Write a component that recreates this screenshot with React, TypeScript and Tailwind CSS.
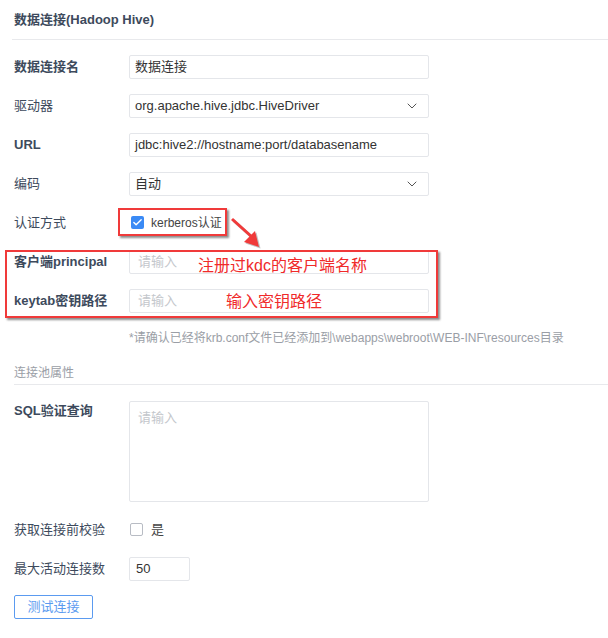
import { ChevronDown, Check } from 'lucide-react'

const FONT = { fontFamily: '"Liberation Sans", "Noto Sans CJK SC", sans-serif' }

function Row({ label, bold, children }: { label: string; bold?: boolean; children: React.ReactNode }) {
  return (
    <div className="flex items-center h-[39px]">
      <div className={`w-[115px] text-[13px] text-[#3d4a5c] ${bold ? 'font-bold' : ''}`}>{label}</div>
      {children}
    </div>
  )
}

function TextBox({ value, placeholder }: { value?: string; placeholder?: string }) {
  return (
    <div className="w-[300px] h-6 border border-[#e4e6ea] rounded-[2px] flex items-center px-[5px] text-[13px]">
      {value ? <span className="text-[#333]">{value}</span> : <span className="pl-[3px] text-[#c4c7cc]">{placeholder}</span>}
    </div>
  )
}

function SelectBox({ value }: { value: string }) {
  return (
    <div className="w-[300px] h-6 border border-[#e4e6ea] rounded-[2px] flex items-center justify-between pl-[5px] pr-2 text-[13px] text-[#333]">
      <span>{value}</span>
      <ChevronDown size={16} strokeWidth={1.5} className="text-[#555]" />
    </div>
  )
}

export default function App() {
  return (
    <div className="w-[608px] h-[638px] bg-white overflow-hidden" style={FONT}>
      <div className="pl-3">
        {/* Header */}
        <div className="h-10 flex items-center pl-0.5 border-b border-[#e8e9ec] text-[13px] font-bold text-[#3d4a5c]">
          数据连接(Hadoop Hive)
        </div>

        <div className="pl-0.5 mt-[7px] relative">
          <Row label="数据连接名" bold><TextBox value="数据连接" /></Row>
          <Row label="驱动器"><SelectBox value="org.apache.hive.jdbc.HiveDriver" /></Row>
          <Row label="URL" bold><TextBox value="jdbc:hive2://hostname:port/databasename" /></Row>
          <Row label="编码"><SelectBox value="自动" /></Row>
          <Row label="认证方式">
            <div className="flex items-center gap-[7px] pl-0.5">
              <span className="w-[13px] h-[13px] rounded-[2px] bg-[#3a8af5] flex items-center justify-center">
                <Check size={11} strokeWidth={3} className="text-white" />
              </span>
              <span className="text-[12px] text-[#444]">kerberos认证</span>
            </div>
          </Row>
          <Row label="客户端principal" bold><TextBox placeholder="请输入" /></Row>
          <Row label="keytab密钥路径" bold><TextBox placeholder="请输入" /></Row>

          {/* annotations */}
          <div className="absolute left-[106px] top-[161px] w-[109px] h-[28px] border-2 border-[#f03a3a] shadow-[2px_2px_2px_rgba(0,0,0,0.45)]" />
          <svg className="absolute left-[216px] top-[168px]" width="40" height="40" viewBox="0 0 40 40">
            <g transform="translate(1.5,1.5)" fill="#888" stroke="#888" opacity="0.5">
              <line x1="4" y1="4" x2="24" y2="22" strokeWidth="3" />
              <polygon points="16,27 31,32 27,16" stroke="none" />
            </g>
            <line x1="4" y1="4" x2="24" y2="22" stroke="#f03a3a" strokeWidth="3" />
            <polygon points="16,27 31,32 27,16" fill="#f03a3a" />
          </svg>
          <div className="absolute left-[-7px] top-[203px] w-[433px] h-[68px] border-2 border-[#f03a3a] shadow-[2px_2px_2px_rgba(0,0,0,0.45)]" />
          <div className="absolute left-[186px] top-[207px] text-[16px] text-[#f02a2a]">注册过kdc的客户端名称</div>
          <div className="absolute left-[214px] top-[243px] text-[16px] text-[#f02a2a]">输入密钥路径</div>
        </div>

        <div className="pl-[117px] mt-[9px] text-[12px] text-[#9a9ea6]">
          *请确认已经将krb.conf文件已经添加到\webapps\webroot\WEB-INF\resources目录
        </div>

        <div className="ml-0.5 mt-[14px] h-[24px] flex items-center border-b border-[#e8e9ec] text-[12px] text-[#9a9ea6]">
          连接池属性
        </div>

        <div className="pl-0.5 mt-[16px] flex">
          <div className="w-[115px] text-[13px] font-bold text-[#3d4a5c]">SQL验证查询</div>
          <div className="w-[300px] h-[101px] border border-[#e4e6ea] rounded-[2px] px-2 pt-[6px] text-[13px] text-[#c4c7cc]">
            请输入
          </div>
        </div>

        <div className="pl-0.5 mt-[8px]">
          <Row label="获取连接前校验">
            <div className="flex items-center gap-2 pl-[1px]">
              <span className="w-[13px] h-[13px] rounded-[2px] border border-[#b8bcc4]" />
              <span className="text-[13px] text-[#444]">是</span>
            </div>
          </Row>
          <Row label="最大活动连接数">
            <div className="w-[61px] h-6 border border-[#e4e6ea] rounded-[2px] flex items-center px-1.5 text-[13px] text-[#333]">50</div>
          </Row>
        </div>

        <div className="pl-0.5 mt-[6px]">
          <button className="w-[79px] h-6 border border-[#5b9bf0] rounded-[2px] text-[13px] text-[#5b9bf0]">测试连接</button>
        </div>
      </div>
    </div>
  )
}
